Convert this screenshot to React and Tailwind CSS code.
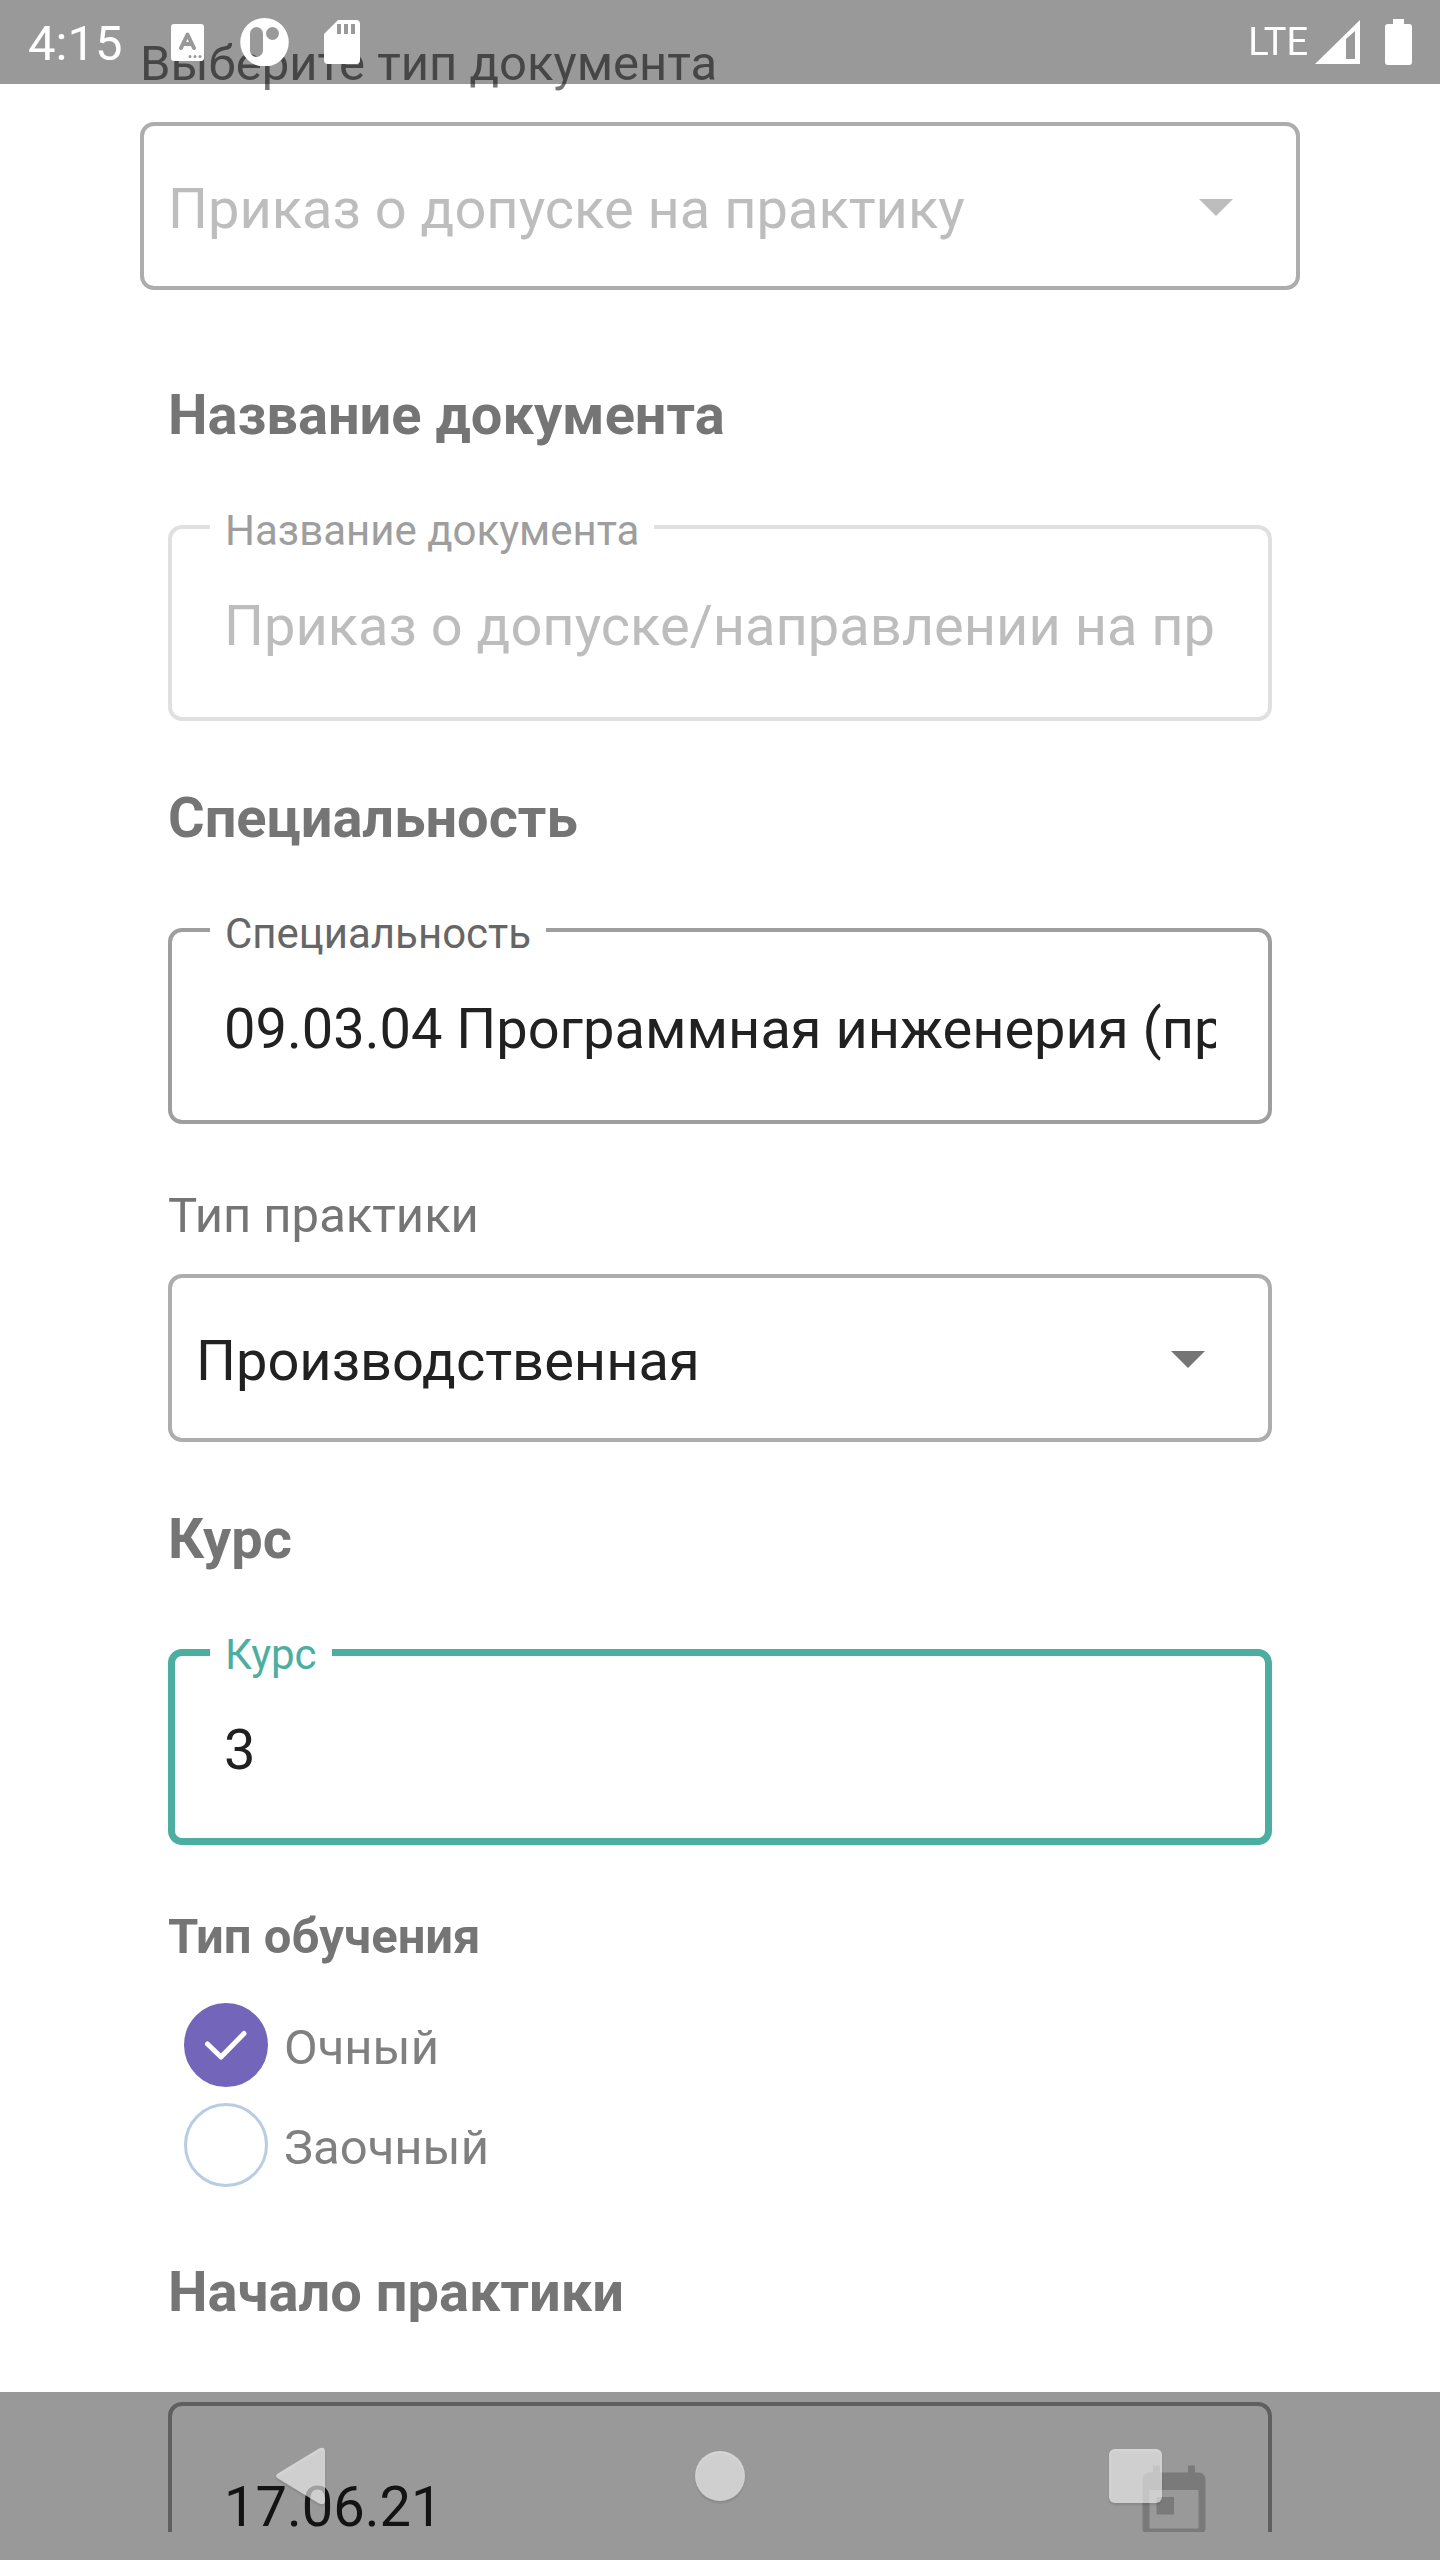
import { useState } from "react";

function Heading({ children }) {
  return <h2 className="pl-7 text-[56px] leading-[64px] font-bold text-[#757575]">{children}</h2>;
}

function OutlinedInput({ id, label, value, tone = "normal" }) {
  const [text, setText] = useState(value);
  const box = {
    normal: "border-4 px-[52px] pt-[65px] pb-[59px] border-[#9e9e9e] text-[#212121]",
    disabled: "border-4 px-[52px] pt-[65px] pb-[59px] border-[#e0e0e0] text-[#bdbdbd]",
    active: "border-[7px] px-[49px] pt-[62px] pb-[56px] border-[#4baea0] text-[#212121]",
  }[tone];
  const caption = {
    normal: "text-[#666666]",
    disabled: "text-[#9e9e9e]",
    active: "text-[#4baea0]",
  }[tone];
  return (
    <div className="relative mx-7 mt-[78px]">
      <input
        id={id}
        type="text"
        value={text}
        disabled={tone === "disabled"}
        onChange={(e) => setText(e.target.value)}
        className={`block w-full rounded-[14px] bg-transparent text-[56px] leading-[64px] outline-none ${box}`}
      />
      <label
        htmlFor={id}
        className={`absolute -top-[18px] left-[42px] bg-white px-[15px] text-[42px] leading-[48px] ${caption}`}
      >
        {label}
      </label>
    </div>
  );
}

function OutlinedSelect({ id, value, disabled = false }) {
  return (
    <div className="relative mt-[30px]">
      <select
        id={id}
        disabled={disabled}
        defaultValue={value}
        className={`block w-full appearance-none rounded-[14px] border-4 border-[#adadad] bg-transparent pt-[51px] pr-[120px] pb-[45px] pl-6 text-[56px] leading-[64px] outline-none disabled:opacity-100 ${
          disabled ? "text-[#bdbdbd]" : "text-[#212121]"
        }`}
      >
        <option value={value}>{value}</option>
      </select>
      <svg
        viewBox="0 0 34 17"
        className={`pointer-events-none absolute top-[77px] right-[67px] w-[34px] ${
          disabled ? "text-[#bdbdbd]" : "text-[#757575]"
        }`}
        fill="currentColor"
        aria-hidden="true"
      >
        <path d="M0 0h34L17 17z" />
      </svg>
    </div>
  );
}

function RadioOption({ label, value, selected, onSelect }) {
  return (
    <label className="flex items-center gap-4 text-[49px] leading-[56px] text-[#808080]">
      <span className="relative size-[84px]">
        <input
          type="radio"
          name="study"
          value={value}
          checked={selected}
          onChange={() => onSelect(value)}
          className="block size-full appearance-none rounded-full border-[3px] border-[#b8cce4] checked:border-[#7265ba] checked:bg-[#7265ba]"
        />
        {selected && (
          <svg viewBox="0 0 84 84" className="pointer-events-none absolute inset-0" fill="none" aria-hidden="true">
            <path d="M23.5 41 37 54 60 30.5" stroke="white" strokeWidth="5" strokeLinecap="round" strokeLinejoin="round" />
          </svg>
        )}
      </span>
      <span className="pt-1.5">{label}</span>
    </label>
  );
}

function StatusBar() {
  return (
    <header className="fixed inset-x-0 top-0 flex h-[84px] items-center justify-between bg-black/40 px-7 text-white">
      <div className="flex items-center">
        <time className="w-[143px] pt-1 text-[49px] leading-[56px]">4:15</time>
        <svg viewBox="0 0 190 48" className="h-12 w-[190px]" aria-hidden="true">
          <rect x="0" y="6" width="33" height="37" rx="3" fill="white" />
          <path
            d="M10 30 16.500 16.500 23 30M12.500 26h8"
            fill="none"
            stroke="#999999"
            strokeWidth="4"
            strokeLinecap="round"
            strokeLinejoin="round"
          />
          <g fill="#999999">
            <circle cx="19" cy="38.500" r="1.500" />
            <circle cx="24" cy="38.500" r="1.500" />
            <circle cx="29" cy="38.500" r="1.500" />
          </g>
          <path
            fill="white"
            fillRule="evenodd"
            d="M93.500 0a24.250 24.250 0 1 1 0 48.500 24.250 24.250 0 0 1 0-48.500zM85.500 9a6.500 6.500 0 0 0-6.500 6.500v17a6.500 6.500 0 0 0 13 0v-17A6.500 6.500 0 0 0 85.500 9zM101.500 9a6.500 6.500 0 1 0 0 13 6.500 6.500 0 0 0 0-13z"
          />
          <path
            fill="white"
            fillRule="evenodd"
            d="M167 2h18a4 4 0 0 1 4 4v36a4 4 0 0 1-4 4h-28a4 4 0 0 1-4-4V16zM166 6v10h4V6zM173 6v10h4V6zM180 6v10h4V6z"
          />
        </svg>
      </div>
      <div className="flex items-center">
        <span className="text-[38px] leading-[48px]">LTE</span>
        <svg viewBox="0 0 98 48" className="ml-1.5 h-12 w-[98px]" aria-hidden="true">
          <path fill="white" fillRule="evenodd" d="M1 46 46 2v44zM32 21v20h9V13z" />
          <path fill="white" d="M79 1h11v5h5a3 3 0 0 1 3 3v35a3 3 0 0 1-3 3H74a3 3 0 0 1-3-3V9a3 3 0 0 1 3-3h5z" />
        </svg>
      </div>
    </header>
  );
}

function NavigationBar() {
  return (
    <nav className="fixed inset-x-0 bottom-0 grid h-[168px] grid-cols-3 place-items-center bg-black/40 px-24">
      <button type="button" aria-label="Назад">
        <svg viewBox="0 0 70 70" className="size-[70px] drop-shadow-[0_2px_1px_rgba(0,0,0,0.2)]" aria-hidden="true">
          <path
            fill="white"
            fillOpacity="0.6"
            d="M9 32.500 50 7.500q6-2.500 6 3v49q0 5.500-6 3L9 37.500q-4-2.500 0-5z"
          />
        </svg>
      </button>
      <button type="button" aria-label="Домой">
        <svg viewBox="0 0 70 70" className="size-[70px] drop-shadow-[0_2px_1px_rgba(0,0,0,0.2)]" aria-hidden="true">
          <circle cx="35" cy="35" r="25" fill="white" fillOpacity="0.6" />
        </svg>
      </button>
      <button type="button" aria-label="Недавние">
        <svg viewBox="0 0 70 70" className="size-[70px] drop-shadow-[0_2px_1px_rgba(0,0,0,0.2)]" aria-hidden="true">
          <rect x="8" y="8" width="53" height="54" rx="6" fill="white" fillOpacity="0.6" />
        </svg>
      </button>
    </nav>
  );
}

export default function App() {
  const [study, setStudy] = useState("full");
  return (
    <div className="h-screen overflow-hidden bg-white pb-7 font-['Roboto',sans-serif]">
      <main className="h-full overflow-hidden px-[140px] pt-9">
        <label htmlFor="doc-type" className="block text-[49px] leading-[56px] text-[#757575]">
          Выберите тип документа
        </label>
        <OutlinedSelect id="doc-type" value="Приказ о допуске на практику" disabled />

        <div className="mt-[93px]">
          <Heading>Название документа</Heading>
          <OutlinedInput
            id="doc-name"
            label="Название документа"
            value="Приказ о допуске/направлении на практику"
            tone="disabled"
          />
        </div>

        <div className="mt-[65px]">
          <Heading>Специальность</Heading>
          <OutlinedInput
            id="speciality"
            label="Специальность"
            value="09.03.04 Программная инженерия (прикладная)"
          />
        </div>

        <div className="mx-7 mt-16">
          <label htmlFor="practice-type" className="block text-[49px] leading-[56px] text-[#757575]">
            Тип практики
          </label>
          <OutlinedSelect id="practice-type" value="Производственная" />
        </div>

        <div className="mt-[65px]">
          <Heading>Курс</Heading>
          <OutlinedInput id="course" label="Курс" value="3" tone="active" />
        </div>

        <fieldset className="mx-7 mt-16">
          <legend className="text-[49px] leading-[56px] font-bold text-[#757575]">Тип обучения</legend>
          <div className="mt-[38px] flex flex-col gap-4 pl-4">
            <RadioOption label="Очный" value="full" selected={study === "full"} onSelect={setStudy} />
            <RadioOption label="Заочный" value="part" selected={study === "part"} onSelect={setStudy} />
          </div>
        </fieldset>

        <div className="mt-[73px]">
          <Heading>Начало практики</Heading>
          <div className="relative mx-7 mt-[78px]">
            <input
              type="text"
              aria-label="Начало практики"
              defaultValue="17.06.21"
              className="block w-full rounded-[14px] border-4 border-[#9e9e9e] bg-transparent px-[52px] pt-[69px] pb-[55px] text-[56px] leading-[64px] text-[#212121] outline-none"
            />
            <svg
              viewBox="0 0 24 24"
              className="pointer-events-none absolute top-[60px] right-14 size-[84px] text-[#cbcbcb]"
              fill="currentColor"
              aria-hidden="true"
            >
              <path d="M19 3h-1V1h-2v2H8V1H6v2H5c-1.110 0-1.990.900-1.990 2L3 19c0 1.100.890 2 2 2h14c1.100 0 2-.900 2-2V5c0-1.100-.900-2-2-2zm0 16H5V8h14v11zM7 10h5v5H7z" />
            </svg>
          </div>
        </div>
      </main>
      <StatusBar />
      <NavigationBar />
    </div>
  );
}
